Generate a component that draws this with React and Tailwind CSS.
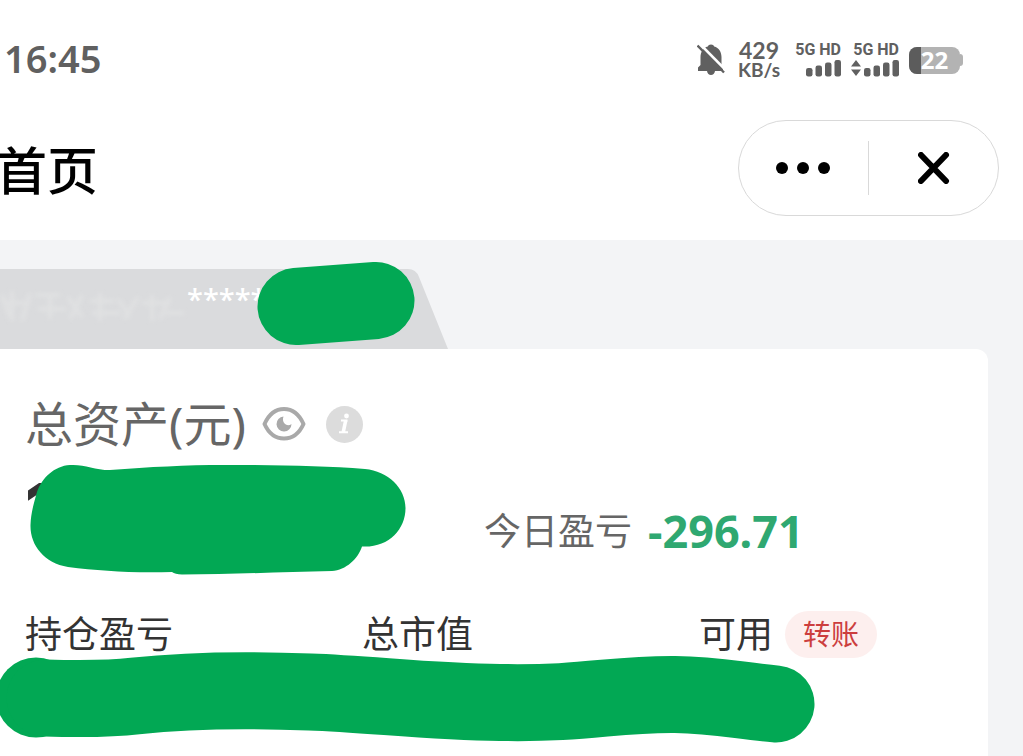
function MutedBell() {
  return (
    <svg className="w-7 h-8" viewBox="0 0 28 32" fill="none" aria-hidden="true">
      <path
        d="M14 .5c-1.600 0-2.800.8-3.200 2C6.200 3.800 3.500 8 3.500 13v8L1 23.500V27h9c.4 2.500 2 4 4 4s3.600-1.500 4-4h8v-3.500L24.500 21v-8c0-5-2.700-9.200-7.300-10.500-.4-1.200-1.600-2-3.200-2z"
        fill="#606060"
      />
      <path d="M2.500-.5 29.500 27" stroke="#fff" strokeWidth="2.600" />
      <path d="M.5 1.500 27 28.500" stroke="#606060" strokeWidth="2.400" />
    </svg>
  );
}

function Signal({ arrows }) {
  return (
    <div className="flex flex-col items-end">
      <span className="font-[Roboto] text-[16px] leading-4 font-bold">
        5G HD
      </span>
      <svg className="w-12 h-[18px] mt-0.5" viewBox="0 0 48 18" aria-hidden="true">
        {arrows && (
          <path d="M5 0l5 6.500H0zM5 16l5-6.500H0z" fill="currentColor" />
        )}
        <g fill="currentColor">
          <rect x="13" y="8" width="6.500" height="8.500" rx="2.200" />
          <rect x="22.500" y="5.500" width="6.500" height="11" rx="2.200" />
          <rect x="32" y="2.500" width="6.500" height="14" rx="2.200" />
          <rect x="41.500" y="0" width="6.500" height="16.500" rx="2.200" />
        </g>
      </svg>
    </div>
  );
}

function Battery() {
  return (
    <div className="flex items-center">
      <div className="relative w-[51px] h-[27px] rounded-lg bg-[#b3b3b3] flex items-center justify-center">
        <div className="absolute left-0 inset-y-0 w-3 rounded-l-lg bg-[#5c5c5c]" />
        <span className="relative text-[24px] leading-6 font-bold text-white">
          22
        </span>
      </div>
      <div className="w-[3px] h-3 rounded-r-full bg-[#b3b3b3]" />
    </div>
  );
}

function StatusBar() {
  return (
    <div className="h-[120px] pl-1 pr-[60px] flex items-center justify-between text-[#606060]">
      <time className="pb-1 text-[38px] leading-10 font-semibold">16:45</time>
      <div className="flex items-center gap-2.5">
        <MutedBell />
        <div className="flex flex-col items-center px-[3px] font-[Lato]">
          <span className="text-[23px] leading-[19px] font-bold">429</span>
          <span className="text-[19px] leading-[19px] font-bold">KB/s</span>
        </div>
        <Signal />
        <Signal arrows />
        <Battery />
      </div>
    </div>
  );
}

function TitleBar() {
  return (
    <div className="flex items-center justify-between pr-6 pb-6">
      <h1 className="-ml-1 pt-1 text-[51px] leading-[60px] font-medium text-black">
        首页
      </h1>
      <div className="h-24 flex items-center rounded-full border border-[#d9d9d9]">
        <button
          className="w-[129px] h-full flex items-center justify-center cursor-pointer"
          aria-label="More"
        >
          <svg className="w-14 h-3" viewBox="0 0 56 12" aria-hidden="true">
            <circle cx="6" cy="6" r="6" />
            <circle cx="27" cy="6" r="6" />
            <circle cx="48" cy="6" r="6" />
          </svg>
        </button>
        <div className="w-px h-[54px] bg-[#d9d9d9]" />
        <button
          className="w-[129px] h-full flex items-center justify-center cursor-pointer"
          aria-label="Close"
        >
          <svg
            className="w-8 h-8"
            viewBox="0 0 32 32"
            stroke="#000"
            strokeWidth="6"
            strokeLinecap="round"
            aria-hidden="true"
          >
            <path d="M3 3l25 26M28 3L3 29" />
          </svg>
        </button>
      </div>
    </div>
  );
}

function AccountTab() {
  return (
    <div className="relative w-[448px] h-20 mt-[29px]">
      <svg className="absolute inset-0 w-full h-full" viewBox="0 0 448 80" aria-hidden="true">
        <path d="M0 0h408q8 0 11 8l29 72H0z" fill="#dadbdd" />
        {/* smudged account name */}
        <g
          className="blur-[2px]"
          stroke="#e6e7e7"
          strokeWidth="4"
          opacity="0.5"
          fill="none"
        >
          <path d="M2 26l8 22M12 22v30M4 34h26M30 24l-8 28M36 26h24M50 24v26M38 40h28M68 28l14 20M82 26l-12 24M90 32h24M100 24v28M92 44h28M118 30l12 18M138 28l-14 22M142 34h28M152 26v26M170 28l-10 22M166 44h18" />
        </g>
      </svg>
      <span className="relative block pl-[187px] pt-3 text-[29px] leading-9 font-medium text-white">
        *****
      </span>
      <svg
        className="absolute left-[255px] -top-2.5 w-[162px] h-[90px]"
        viewBox="255 259 162 90"
        aria-hidden="true"
      >
        <path
          d="M296 306.500L376 300.500"
          stroke="#02a854"
          strokeWidth="77"
          strokeLinecap="round"
        />
      </svg>
    </div>
  );
}

function EyeIcon() {
  return (
    <svg className="w-11 h-9" viewBox="0 0 44 36" fill="none" aria-hidden="true">
      <path
        d="M2.500 18C7 8 14 3 22 3s15 5 19.500 15C37 28 30 32.500 22 32.500S7 28 2.500 18z"
        stroke="#a9a9a9"
        strokeWidth="4"
        strokeLinejoin="round"
      />
      <path
        d="M21.500 10.500a7.500 7.500 0 1 0 8 7.500c-2 1.600-5 1.600-6.700-.2-1.900-1.800-2.300-4.800-1.300-7.300z"
        fill="#a9a9a9"
      />
    </svg>
  );
}

function InfoIcon() {
  return (
    <svg className="w-[37px] h-[37px]" viewBox="0 0 37 37" aria-hidden="true">
      <circle cx="18.500" cy="18.500" r="18.500" fill="#dcdcdc" />
      <circle cx="20.500" cy="10" r="2.400" fill="#fff" />
      <path d="M15 14.500h6.500M13 26.300h9" stroke="#fff" strokeWidth="2" />
      <path d="M19.700 14.500L17.300 26" stroke="#fff" strokeWidth="3.600" />
    </svg>
  );
}

function AssetCard() {
  return (
    <section className="flex-1 mr-[35px] pl-[25px] pt-10 bg-white rounded-tr-xl">
      <div className="h-[70px] flex items-center">
        <h2 className="text-[48px] leading-[56px] text-[#666]">总资产(元)</h2>
        <button className="ml-4 cursor-pointer" aria-label="Toggle amounts">
          <EyeIcon />
        </button>
        <button className="ml-5 cursor-pointer" aria-label="Info">
          <InfoIcon />
        </button>
      </div>

      <div className="relative h-36 grid grid-cols-[459px_1fr] items-center">
        <strong className="self-start pt-3.5 font-[Inter] text-[68px] leading-[68px] font-extrabold text-[#333]">
          1
        </strong>
        <div className="flex items-center gap-4">
          <span className="text-[37px] leading-10 text-[#666]">今日盈亏</span>
          <span className="text-[45px] leading-[48px] font-bold text-[#2fa871]">
            -296.71
          </span>
        </div>
        <svg
          className="absolute left-0 top-1 w-[384px] h-[114px]"
          viewBox="25 463 384 114"
          aria-hidden="true"
        >
          <path
            d="M70 465C84 464 94 470 110 470C150 467 185 465 225 465C280 465 325 466 365 469C388 471 405.500 488 405.500 508C405.500 530 388 548 362 546.500C358 559 346 570 332 571C280 572 230 574.500 182 574.500Q175 574 172 572C130 573 100 571 68 567C44 563 30 545 30.500 525C31 512 34 503 37 492C42 478 54 466 70 465Z"
            fill="#02a854"
          />
        </svg>
      </div>

      <div className="h-[62px] grid grid-cols-[35%_35%_30%] items-center text-[37px] leading-10 text-[#333]">
        <span>持仓盈亏</span>
        <span>总市值</span>
        <div className="flex items-center gap-3">
          <span>可用</span>
          <button className="h-[47px] px-[18px] rounded-full bg-[#fdefee] text-[28px] leading-8 text-[#cc3e3e] cursor-pointer">
            转账
          </button>
        </div>
      </div>

      <div className="relative h-[78px]">
        <svg
          className="absolute -left-[25px] -top-[15px] w-[820px] h-[96px]"
          viewBox="0 650 820 96"
          fill="none"
          aria-hidden="true"
        >
          <circle cx="36" cy="697.500" r="40" fill="#02a854" />
          <path
            d="M45 698C80 699 110 699 135 696C190 690 260 690 310 692C370 694 430 702 500 702.500C590 704 610 694 675 694.500C715 695 735 700 776 704"
            stroke="#02a854"
            strokeWidth="77"
            strokeLinecap="round"
          />
        </svg>
      </div>
    </section>
  );
}

export default function App() {
  return (
    <div className="min-h-screen flex flex-col overflow-hidden bg-[#f3f4f6] font-['Noto_Sans','Noto_Sans_CJK_SC',sans-serif]">
      <header className="bg-white">
        <StatusBar />
        <TitleBar />
      </header>
      <main className="flex-1 flex flex-col">
        <AccountTab />
        <AssetCard />
      </main>
    </div>
  );
}
